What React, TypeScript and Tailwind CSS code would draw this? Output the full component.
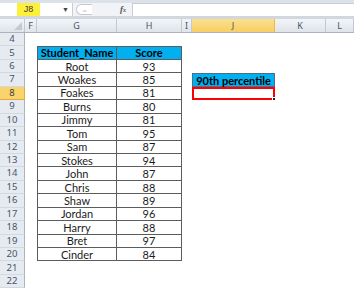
const data: [string, number][] = [
  ['Root', 93],
  ['Woakes', 85],
  ['Foakes', 81],
  ['Burns', 80],
  ['Jimmy', 81],
  ['Tom', 95],
  ['Sam', 87],
  ['Stokes', 94],
  ['John', 87],
  ['Chris', 88],
  ['Shaw', 89],
  ['Jordan', 96],
  ['Harry', 88],
  ['Bret', 97],
  ['Cinder', 84],
]

const cols = [
  { id: 'F', w: 'w-[12px]' },
  { id: 'G', w: 'w-[80px]' },
  { id: 'H', w: 'w-[65px]' },
  { id: 'I', w: 'w-[10px]' },
  { id: 'J', w: 'w-[83px]' },
  { id: 'K', w: 'w-[51px]' },
  { id: 'L', w: 'flex-1' },
]

function FormulaBar() {
  return (
    <div className="h-[19px] bg-[#dde2e8] pt-[3px] flex flex-col">
      <div className="h-[13px] flex bg-white">
        <div className="w-[72px] flex items-center">
          <div className="ml-[17px] w-[23px] h-[13px] bg-[#fdf03a] flex items-center justify-center text-[9px] text-[#3b3b3b] font-['Liberation_Sans',sans-serif]">
            J8
          </div>
          <span className="ml-auto mr-[3px] text-[7px] text-[#444]">▼</span>
        </div>
        <div className="w-[60px] bg-[#f1f3f6] flex items-center border-l border-[#c9ced6]">
          <div className="ml-[3px] w-[16px] h-[11px] rounded-l-full border border-r-0 border-[#c5cad2] bg-white flex items-center justify-center text-[8px] text-[#c0c5cc]">
            =
          </div>
          <span className="ml-auto mr-[6px] text-[9px] italic font-bold text-[#555] font-['Liberation_Serif',serif]">
            f<span className="text-[6px]">x</span>
          </span>
        </div>
        <div className="flex-1 bg-white border-l border-t border-[#c9ced6]" />
      </div>
      <div className="h-[3px] bg-[#d2d7de]" />
    </div>
  )
}

function ColumnHeaders() {
  return (
    <div className="h-[14px] flex font-['Noto_Sans',sans-serif] text-[9px] text-[#4b5565] border-b border-[#aab3bf]">
      <div className="w-[25px] bg-gradient-to-b from-[#f3f5f8] to-[#dfe4ea] border-r border-[#c3c9d1] relative">
        <svg className="absolute right-[2px] bottom-[2px]" width="8" height="8" viewBox="0 0 8 8">
          <polygon points="8,0 8,8 0,8" fill="#c4c9d0" />
        </svg>
      </div>
      {cols.map((c) => (
        <div
          key={c.id}
          className={`${c.w} flex items-center justify-center border-r ${
            c.id === 'J'
              ? 'bg-gradient-to-b from-[#fbe08f] to-[#f8ce62] border-[#e9b94a]'
              : 'bg-gradient-to-b from-[#f3f5f8] to-[#dfe4ea] border-[#c3c9d1]'
          }`}
        >
          {c.id}
        </div>
      ))}
    </div>
  )
}

function Row({ n, children }: { n: number; children?: React.ReactNode }) {
  const active = n === 8
  return (
    <div className="h-[13.44px] flex">
      <div
        className={`w-[25px] shrink-0 flex items-center justify-center text-[9.5px] font-['Noto_Sans',sans-serif] border-r border-b ${
          active
            ? 'bg-[#f9d46e] text-[#3b3b3b] border-[#e2ab3a]'
            : 'bg-[#e6ebf1] text-[#46536a] border-r-[#aab3bf] border-b-[#d3d9e1]'
        }`}
      >
        {n}
      </div>
      <div className="w-[12px]" />
      {children}
    </div>
  )
}

export default function App() {
  const rowNums = Array.from({ length: 19 }, (_, i) => i + 4)
  return (
    <div className="w-[354px] h-[293px] bg-white overflow-hidden font-['Lato',sans-serif] text-[11px] text-[#1c1c1c]">
      <FormulaBar />
      <ColumnHeaders />
      {rowNums.map((n) => {
        const idx = n - 6
        const inTable = n >= 5 && n <= 20
        const header = n === 5
        return (
          <Row key={n} n={n}>
            {inTable ? (
              <>
                <div
                  className={`w-[80px] flex items-center justify-center border-l border-r border-b border-[#5c5c5c] leading-[11px] ${
                    header ? 'border-t bg-[#00b0f0] font-bold text-black pb-[2px]' : ''
                  }`}
                >
                  {header ? 'Student_Name' : data[idx][0]}
                </div>
                <div
                  className={`w-[65px] flex items-center justify-center border-r border-b border-[#5c5c5c] leading-[11px] ${
                    header ? 'border-t bg-[#00b0f0] font-bold text-black pb-[2px]' : ''
                  }`}
                >
                  {header ? 'Score' : data[idx][1]}
                </div>
              </>
            ) : (
              <div className="w-[145px]" />
            )}
            <div className="w-[10px]" />
            {n === 7 && (
              <div className="w-[83px] bg-[#00b0f0] border border-[#4a6f86] flex items-center justify-center font-bold text-black leading-[11px]">
                90th percentile
              </div>
            )}
            {n === 8 && (
              <div className="w-[83px] border-2 border-[#ff0000] relative">
                <div className="absolute -right-[3px] -bottom-[3px] w-[4px] h-[4px] bg-[#222] border border-white" />
              </div>
            )}
          </Row>
        )
      })}
    </div>
  )
}
